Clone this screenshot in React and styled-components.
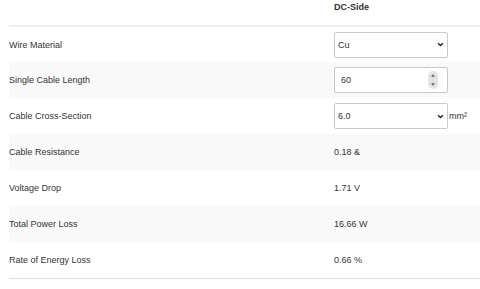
import React from "react";
import styled, { createGlobalStyle } from "styled-components";

const Global = createGlobalStyle`
  body {
    margin: 0;
    background: #fff;
    font-family: "Liberation Sans", Arial, sans-serif;
    color: #333;
  }
`;

const Wrap = styled.div`
  padding-left: 9px;
  overflow: hidden;
`;

const Table = styled.table`
  width: 100%;
  border-collapse: collapse;
  font-size: 9px;
`;

const HeadCell = styled.th`
  box-sizing: border-box;
  height: 26px;
  padding: 2px 0 0;
  text-align: left;
  vertical-align: top;
  font-weight: bold;
  border-bottom: 2px solid #eee;
`;

const Row = styled.tr`
  height: 36px;
  background: ${(p) => (p.$striped ? "#f9f9f9" : "#fff")};
  border-bottom: ${(p) => (p.$last ? "1px solid #ddd" : "none")};
`;

const Label = styled.td`
  width: 325px;
  padding: 0;
  vertical-align: middle;
`;

const Value = styled.td`
  padding: 0;
  vertical-align: middle;
`;

const Field = styled.div`
  display: flex;
  align-items: center;
  gap: 1px;
`;

const Box = styled.div`
  box-sizing: border-box;
  width: 114px;
  height: 26px;
  border: 1px solid #c9c9c9;
  border-radius: 2px;
  background: #fff;
  display: flex;
  align-items: center;
  justify-content: space-between;
  padding: 0 ${(p) => (p.$number ? "9px" : "3px")} 0 ${(p) => (p.$number ? "6px" : "3px")};
`;

const Chevron = () => (
  <svg width="7" height="5" viewBox="0 0 7 5">
    <path d="M1 1.2 L3.5 3.5 L6 1.2" fill="none" stroke="#222" strokeWidth="1.4" />
  </svg>
);

const Spinner = styled.div`
  width: 10px;
  height: 18px;
  border-radius: 5px;
  background: #e3e3e3;
  display: flex;
  flex-direction: column;
  align-items: center;
  justify-content: space-between;
  padding: 3px 0;
  box-sizing: border-box;
`;

const Tri = styled.span`
  width: 0;
  height: 0;
  border-left: 2.5px solid transparent;
  border-right: 2.5px solid transparent;
  ${(p) => (p.$down ? "border-top: 3px solid #777;" : "border-bottom: 3px solid #777;")}
`;

const Unit = styled.span`
  font-size: 9px;
`;

export default function App() {
  return (
    <>
      <Global />
      <Wrap>
        <Table>
          <thead>
            <tr>
              <HeadCell />
              <HeadCell>DC-Side</HeadCell>
            </tr>
          </thead>
          <tbody>
            <Row>
              <Label>Wire Material</Label>
              <Value>
                <Box>
                  <span>Cu</span>
                  <Chevron />
                </Box>
              </Value>
            </Row>
            <Row $striped>
              <Label>Single Cable Length</Label>
              <Value>
                <Box $number>
                  <span>60</span>
                  <Spinner>
                    <Tri />
                    <Tri $down />
                  </Spinner>
                </Box>
              </Value>
            </Row>
            <Row>
              <Label>Cable Cross-Section</Label>
              <Value>
                <Field>
                  <Box>
                    <span>6.0</span>
                    <Chevron />
                  </Box>
                  <Unit>mm²</Unit>
                </Field>
              </Value>
            </Row>
            <Row $striped>
              <Label>Cable Resistance</Label>
              <Value>0.18 &amp;</Value>
            </Row>
            <Row>
              <Label>Voltage Drop</Label>
              <Value>1.71 V</Value>
            </Row>
            <Row $striped>
              <Label>Total Power Loss</Label>
              <Value>16.66 W</Value>
            </Row>
            <Row $last>
              <Label>Rate of Energy Loss</Label>
              <Value>0.66 %</Value>
            </Row>
          </tbody>
        </Table>
      </Wrap>
    </>
  );
}
